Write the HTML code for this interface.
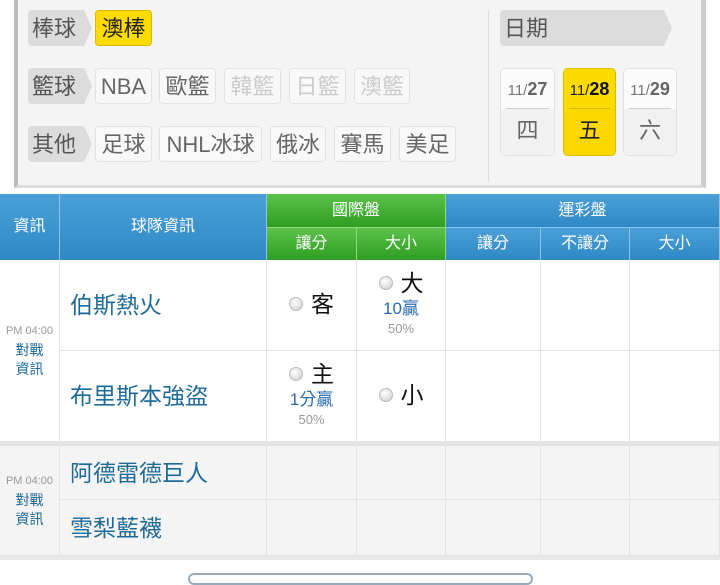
<!DOCTYPE html>
<html><head><meta charset="utf-8"><style>
*{margin:0;padding:0;box-sizing:border-box}
body{width:720px;height:576px;overflow:hidden;background:#fff;font-family:"Liberation Sans","Noto Sans CJK TC",sans-serif;position:relative}
.a{position:absolute}
.panel{left:14px;top:-4px;width:692px;height:192px;background:#f4f4f4;border-left:4px solid #bbb;border-right:5px solid #ccc;border-bottom:3px solid #ddd}
.lab{position:absolute;height:36px;background:#dcdcdc;color:#555;font-size:22px;line-height:38px;padding-left:4px;border-radius:4px 0 0 4px}
.lab:after{content:"";position:absolute;right:-8px;top:0;border-left:8px solid #dcdcdc;border-top:18px solid transparent;border-bottom:18px solid transparent}
.tag{position:absolute;height:36px;background:#f8f8f8;border:1px solid #e2e2e2;border-radius:4px;color:#666;font-size:22px;line-height:36px;text-align:center}
.dis{color:#ccc}
.yel{background:#fcdc00;border-color:#d9b800;color:#222}
.db{position:absolute;top:68px;width:55px;height:88px;background:#fbfbfb;border:1px solid #e2e2e2;border-radius:5px;text-align:center}
.db .t{height:40px;line-height:40px;font-size:15px;color:#777;border-bottom:1px solid #ccc;margin:0 5px}
.db .t b{font-size:18px;color:#666}
.db .w{height:46px;line-height:44px;font-size:22px;color:#666;background:#f1f1f1;border-radius:0 0 5px 5px}
.hd{position:absolute;color:#fff;text-align:center;font-size:16px;border-right:1px solid #8cc4ea}
.bl{background:linear-gradient(#4aa0d8,#2f88c6)}
.gr{background:linear-gradient(#5cc24a,#2f9e22);border-right-color:#8fd880}
.c{position:absolute;border-right:1px solid #e3e3e3;border-bottom:1px solid #e3e3e3}
.team{color:#1e6a98;font-size:23px;padding-left:10px}
.r{display:inline-block;width:14px;height:14px;border-radius:50%;background:radial-gradient(circle at 40% 35%,#fff,#ccc);border:1px solid #bbb;vertical-align:middle;margin-right:8px}
.big{font-size:23px;color:#111;vertical-align:middle}
.bl2{color:#2a6bb0;font-size:17px}
.pc{color:#999;font-size:13px}
.info{color:#1e6a98;font-size:14px;text-align:center;line-height:19px}
.tm{color:#999;font-size:11px}
</style></head><body>
<div class="a panel"></div>
<div class="a" style="left:488px;top:10px;width:1px;height:172px;background:#ddd"></div>
<div class="lab" style="left:28px;top:10px;width:56px">棒球</div>
<div class="tag yel" style="left:95px;top:10px;width:57px">澳棒</div>
<div class="lab" style="left:28px;top:68px;width:56px">籃球</div>
<div class="tag" style="left:95px;top:68px;width:57px">NBA</div>
<div class="tag" style="left:159px;top:68px;width:57px">歐籃</div>
<div class="tag dis" style="left:224px;top:68px;width:57px">韓籃</div>
<div class="tag dis" style="left:289px;top:68px;width:57px">日籃</div>
<div class="tag dis" style="left:354px;top:68px;width:56px">澳籃</div>
<div class="lab" style="left:28px;top:126px;width:56px">其他</div>
<div class="tag" style="left:95px;top:126px;width:57px">足球</div>
<div class="tag" style="left:159px;top:126px;width:103px">NHL冰球</div>
<div class="tag" style="left:270px;top:126px;width:56px">俄冰</div>
<div class="tag" style="left:334px;top:126px;width:57px">賽馬</div>
<div class="tag" style="left:399px;top:126px;width:57px">美足</div>
<div class="lab" style="left:500px;top:10px;width:164px">日期</div>
<div class="db" style="left:500px">
<div class="t">11/<b>27</b></div><div class="w">四</div></div>
<div class="db" style="left:563px;width:53px;background:#fcdc00;border-color:#d9b800">
<div class="t" style="color:#222;border-color:#d9b800">11/<b style="color:#111">28</b></div><div class="w" style="background:#fcd800;color:#222">五</div></div>
<div class="db" style="left:623px;width:54px">
<div class="t">11/<b>29</b></div><div class="w">六</div></div>

<div class="hd bl" style="left:0;top:194px;width:60px;height:66px;line-height:66px">資訊</div>
<div class="hd bl" style="left:60px;top:194px;width:207px;height:66px;line-height:66px">球隊資訊</div>
<div class="hd gr" style="left:267px;top:194px;width:179px;height:34px;line-height:34px;border-bottom:1px solid #8fd880">國際盤</div>
<div class="hd gr" style="left:267px;top:228px;width:90px;height:32px;line-height:32px">讓分</div>
<div class="hd gr" style="left:357px;top:228px;width:89px;height:32px;line-height:32px">大小</div>
<div class="hd bl" style="left:446px;top:194px;width:274px;height:34px;line-height:34px;border-bottom:1px solid #8cc4ea">運彩盤</div>
<div class="hd bl" style="left:446px;top:228px;width:95px;height:32px;line-height:32px">讓分</div>
<div class="hd bl" style="left:541px;top:228px;width:89px;height:32px;line-height:32px">不讓分</div>
<div class="hd bl" style="left:630px;top:228px;width:90px;height:32px;line-height:32px">大小</div>

<div class="c" style="left:0;top:260px;width:60px;height:182px;padding-top:60px"><div class="info"><span class="tm">PM 04:00</span><br>對戰<br>資訊</div></div>
<div class="c team" style="left:60px;top:260px;width:207px;height:91px;line-height:91px">伯斯熱火</div>
<div class="c team" style="left:60px;top:351px;width:207px;height:91px;line-height:91px">布里斯本強盜</div>
<div class="c" style="left:267px;top:260px;width:90px;height:91px;text-align:center;line-height:88px"><span class="r"></span><span class="big">客</span></div>
<div class="c" style="left:357px;top:260px;width:89px;height:91px;text-align:center;padding-top:10px;line-height:26px"><span class="r"></span><span class="big">大</span><br><span class="bl2">10贏</span><br><span class="pc" style="line-height:12px;display:block">50%</span></div>
<div class="c" style="left:267px;top:351px;width:90px;height:91px;text-align:center;padding-top:10px;line-height:26px"><span class="r"></span><span class="big">主</span><br><span class="bl2">1分贏</span><br><span class="pc" style="line-height:12px;display:block">50%</span></div>
<div class="c" style="left:357px;top:351px;width:89px;height:91px;text-align:center;line-height:88px"><span class="r"></span><span class="big">小</span></div>
<div class="c" style="left:446px;top:260px;width:95px;height:91px"></div>
<div class="c" style="left:541px;top:260px;width:89px;height:91px"></div>
<div class="c" style="left:630px;top:260px;width:90px;height:91px"></div>
<div class="c" style="left:446px;top:351px;width:95px;height:91px"></div>
<div class="c" style="left:541px;top:351px;width:89px;height:91px"></div>
<div class="c" style="left:630px;top:351px;width:90px;height:91px"></div>

<div class="a" style="left:0;top:442px;width:720px;height:4px;background:#e4e4e4"></div>
<div class="a" style="left:0;top:446px;width:720px;height:110px;background:#f4f4f4"></div>
<div class="c" style="left:0;top:446px;width:60px;height:110px;padding-top:24px"><div class="info"><span class="tm">PM 04:00</span><br>對戰<br>資訊</div></div>
<div class="c team" style="left:60px;top:446px;width:207px;height:54px;line-height:54px">阿德雷德巨人</div>
<div class="c team" style="left:60px;top:500px;width:207px;height:56px;line-height:56px">雪梨藍襪</div>
<div class="c" style="left:267px;top:446px;width:90px;height:54px"></div><div class="c" style="left:267px;top:500px;width:90px;height:56px"></div>
<div class="c" style="left:357px;top:446px;width:89px;height:54px"></div><div class="c" style="left:357px;top:500px;width:89px;height:56px"></div>
<div class="c" style="left:446px;top:446px;width:95px;height:54px"></div><div class="c" style="left:446px;top:500px;width:95px;height:56px"></div>
<div class="c" style="left:541px;top:446px;width:89px;height:54px"></div><div class="c" style="left:541px;top:500px;width:89px;height:56px"></div>
<div class="c" style="left:630px;top:446px;width:90px;height:54px"></div><div class="c" style="left:630px;top:500px;width:90px;height:56px"></div>
<div class="a" style="left:0;top:556px;width:720px;height:4px;background:#e8e8e8"></div>
<div class="a" style="left:188px;top:573px;width:345px;height:12px;border:2px solid #9ab;border-radius:8px"></div>
</body></html>
